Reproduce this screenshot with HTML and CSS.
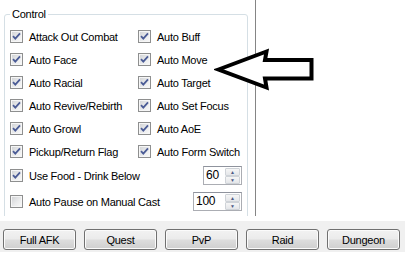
FILE: index.html
```html
<!DOCTYPE html>
<html lang="en">
<head>
    <meta charset="UTF-8">
    <meta name="viewport" content="width=device-width, initial-scale=1.0">
    <title>Control</title>
    <link rel="stylesheet" href="styles.css">
</head>
<body>
    <div class="window">
        <div class="tab-page">
            <div class="group">
                <span class="group-title">Control</span>
                <div class="options">
                    <label class="option"><span class="check"><svg viewBox="0 0 11 11"><path d="M2 5.2 L4.3 7.6 L9 2.4" /></svg></span>Attack Out Combat</label>
                    <label class="option"><span class="check"><svg viewBox="0 0 11 11"><path d="M2 5.2 L4.3 7.6 L9 2.4" /></svg></span>Auto Buff</label>
                    <label class="option"><span class="check"><svg viewBox="0 0 11 11"><path d="M2 5.2 L4.3 7.6 L9 2.4" /></svg></span>Auto Face</label>
                    <label class="option"><span class="check"><svg viewBox="0 0 11 11"><path d="M2 5.2 L4.3 7.6 L9 2.4" /></svg></span>Auto Move</label>
                    <label class="option"><span class="check"><svg viewBox="0 0 11 11"><path d="M2 5.2 L4.3 7.6 L9 2.4" /></svg></span>Auto Racial</label>
                    <label class="option"><span class="check"><svg viewBox="0 0 11 11"><path d="M2 5.2 L4.3 7.6 L9 2.4" /></svg></span>Auto Target</label>
                    <label class="option"><span class="check"><svg viewBox="0 0 11 11"><path d="M2 5.2 L4.3 7.6 L9 2.4" /></svg></span>Auto Revive/Rebirth</label>
                    <label class="option"><span class="check"><svg viewBox="0 0 11 11"><path d="M2 5.2 L4.3 7.6 L9 2.4" /></svg></span>Auto Set Focus</label>
                    <label class="option"><span class="check"><svg viewBox="0 0 11 11"><path d="M2 5.2 L4.3 7.6 L9 2.4" /></svg></span>Auto Growl</label>
                    <label class="option"><span class="check"><svg viewBox="0 0 11 11"><path d="M2 5.2 L4.3 7.6 L9 2.4" /></svg></span>Auto AoE</label>
                    <label class="option"><span class="check"><svg viewBox="0 0 11 11"><path d="M2 5.2 L4.3 7.6 L9 2.4" /></svg></span>Pickup/Return Flag</label>
                    <label class="option"><span class="check"><svg viewBox="0 0 11 11"><path d="M2 5.2 L4.3 7.6 L9 2.4" /></svg></span>Auto Form Switch</label>
                </div>

                <div class="spin-row">
                    <label class="option"><span class="check"><svg viewBox="0 0 11 11"><path d="M2 5.2 L4.3 7.6 L9 2.4" /></svg></span>Use Food - Drink Below</label>
                    <div class="spin">
                        <span class="spin-value">60</span>
                        <span class="spin-btns"><span class="spin-btn">&#9650;</span><span class="spin-btn">&#9660;</span></span>
                    </div>
                </div>
                <div class="spin-row tall">
                    <label class="option"><span class="check"></span>Auto Pause on Manual Cast</label>
                    <div class="spin wide">
                        <span class="spin-value">100</span>
                        <span class="spin-btns"><span class="spin-btn">&#9650;</span><span class="spin-btn">&#9660;</span></span>
                    </div>
                </div>
            </div>
        </div>

        <div class="button-bar">
            <button class="btn">Full AFK</button>
            <button class="btn">Quest</button>
            <button class="btn">PvP</button>
            <button class="btn">Raid</button>
            <button class="btn">Dungeon</button>
        </div>

        <svg class="arrow" width="102" height="46" viewBox="0 0 102 46">
            <polygon points="4.5,21.5 52.5,3.5 51,12 97.5,12 97.5,30.5 51,30.5 52.5,39.5" />
        </svg>
    </div>
</body>
</html>
```

FILE: styles.css
```css
body {
    margin: 0;
    background: #fff;
    color: #000;
    font-family: "Liberation Sans", Arial, sans-serif;
    font-size: 11px;
    letter-spacing: -0.25px;
}

.window {
    position: relative;
    width: 413px;
    height: 265px;
    overflow: hidden;
}

.tab-page {
    width: 255px;
    height: 216px;
    border-right: 1px solid #858585;
    overflow: hidden;
}

.group {
    position: relative;
    width: 244px;
    height: 240px;
    margin: 14px 0 0 4px;
    padding: 10px 5px 0 5px;
    box-sizing: border-box;
    border: 1px solid #d5dfe5;
    border-radius: 3px;
}

.group-title {
    position: absolute;
    top: -7px;
    left: 5px;
    padding: 0 2px;
    line-height: 13px;
    background: #fff;
}

.options {
    display: grid;
    grid-template-columns: 128px 1fr;
    grid-auto-rows: 23px;
}

.option {
    display: flex;
    align-items: center;
    gap: 6px;
    white-space: nowrap;
}

.check {
    display: flex;
    width: 13px;
    height: 13px;
    flex: none;
    box-sizing: border-box;
    border: 1px solid #8e8f8f;
    background: linear-gradient(135deg, #cfd1d4 0%, #eaebec 55%, #fafafa 100%);
    box-shadow: inset 0 0 0 1px #f6f6f6;
}

.check svg {
    width: 11px;
    height: 11px;
}

.check path {
    fill: none;
    stroke: #4b5c96;
    stroke-width: 1.8;
}

.spin-row {
    display: flex;
    justify-content: space-between;
    align-items: center;
    height: 25px;
}

.spin-row.tall {
    height: 27px;
}

.spin {
    display: flex;
    width: 39px;
    height: 19px;
    box-sizing: border-box;
    border: 1px solid #abadb3;
    border-top-color: #8f939d;
    background: #fff;
}

.spin.wide {
    width: 49px;
}

.spin-value {
    flex: 1;
    padding-left: 2px;
    font-size: 12px;
    line-height: 17px;
}

.spin-btns {
    display: flex;
    flex-direction: column;
    width: 15px;
    padding: 1px 1px 1px 0;
}

.spin-btn {
    flex: 1;
    display: flex;
    align-items: center;
    justify-content: center;
    border: 1px solid #cfd3d8;
    border-radius: 1px;
    background: linear-gradient(#f6f6f6, #e4e6e9);
    color: #4d5b85;
    font-size: 5px;
    letter-spacing: 0;
}

.button-bar {
    display: flex;
    gap: 8px;
    width: 405px;
    height: 31px;
    margin-top: 5px;
    padding: 8px 0 0 3px;
    box-sizing: border-box;
    background: #f0f0f0;
}

.btn {
    width: 73px;
    height: 21px;
    padding: 0;
    border: 1px solid #707070;
    border-radius: 3px;
    background: linear-gradient(#f2f2f2 0%, #ebebeb 48%, #dddddd 52%, #cfcfcf 100%);
    box-shadow: inset 0 0 0 1px #fbfbfb;
    color: #000;
    font: inherit;
    letter-spacing: inherit;
}

.arrow {
    position: absolute;
    left: 214px;
    top: 48px;
}

.arrow polygon {
    fill: #fff;
    stroke: #000;
    stroke-width: 4;
    stroke-linejoin: miter;
    stroke-miterlimit: 10;
}
```
